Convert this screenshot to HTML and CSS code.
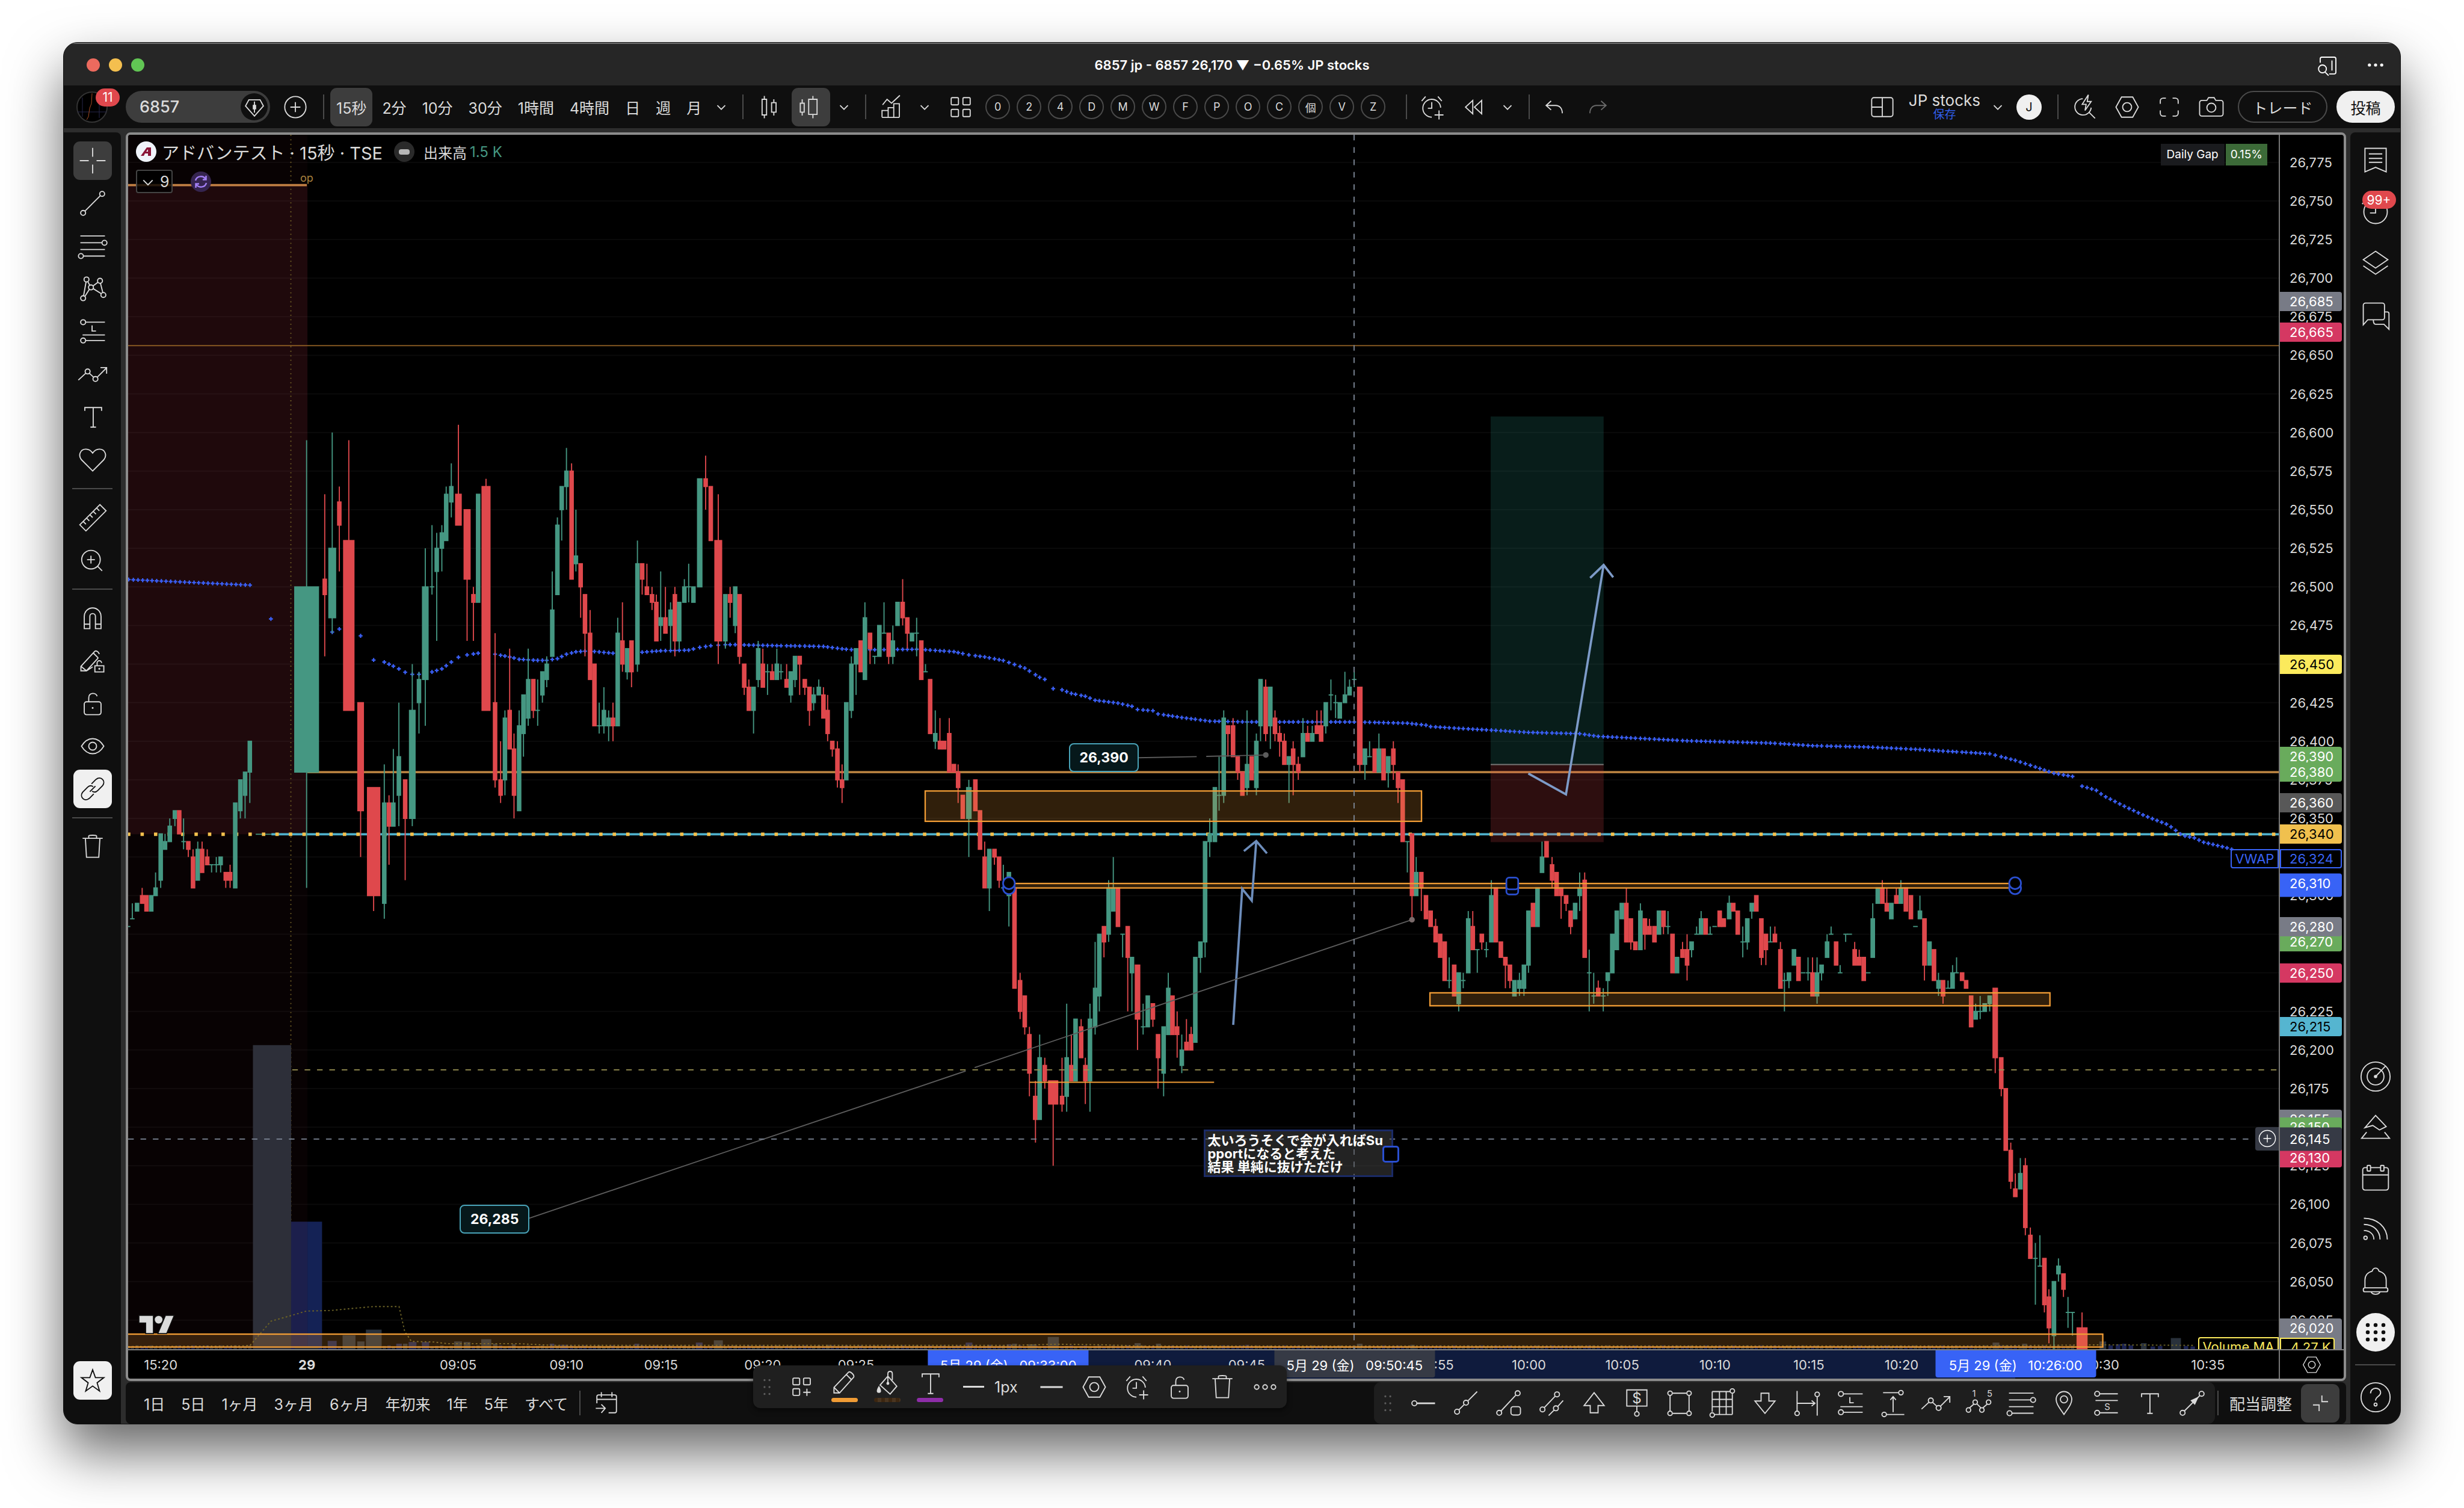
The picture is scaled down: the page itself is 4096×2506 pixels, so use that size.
FILE: index.html
```html
<!DOCTYPE html>
<html lang="ja">
<head>
<meta charset="utf-8">
<title>6857 jp - 6857 26,170 ▼ −0.65% JP stocks</title>
<link rel="stylesheet" href="styles.css">
</head>
<body>
<svg class="sprite" aria-hidden="true">
  <symbol id="cross" viewBox="0 0 28 28"><path d="M2.5 14h8M17.5 14h8M14 2.5v8M14 17.5v8"/></symbol>
  <symbol id="trend" viewBox="0 0 28 28"><circle cx="5.5" cy="22.5" r="2.2"/><circle cx="22.5" cy="5.5" r="2.2"/><path d="M7.1 20.9 20.9 7.1"/></symbol>
  <symbol id="fib" viewBox="0 0 28 28"><path d="M3 4.9h22M3 11h19.5M3 17h22M5.7 22.9H25"/><circle cx="24.6" cy="11" r="2.2"/><circle cx="3.5" cy="22.9" r="2.2"/></symbol>
  <symbol id="pattern" viewBox="0 0 28 28"><circle cx="5.5" cy="22.4" r="2.2"/><circle cx="8.5" cy="5.6" r="2.2"/><circle cx="12.5" cy="12.7" r="2.2"/><circle cx="20.6" cy="6.8" r="2.2"/><circle cx="23.6" cy="19.5" r="2.2"/><path d="m5.9 20.2 2.2-12.4M9.6 7.5l1.8 3.3M14.3 11.4l4.5-3.3M21 9l2.1 8.3M7 20.8l4.1-6.4M14.5 13.8l7.2 4.5"/></symbol>
  <symbol id="proj" viewBox="0 0 28 28"><circle cx="5.5" cy="5.6" r="2.2"/><path d="M7.7 5.6H25M5 17h20M7.7 22H25M13.5 8.5v5H17"/><circle cx="5.5" cy="22" r="2.2"/></symbol>
  <symbol id="path" viewBox="0 0 28 28"><circle cx="9.5" cy="11.5" r="2.2"/><circle cx="16.5" cy="18.2" r="2.2"/><path d="M1.2 19.2 7.9 13M11.1 13.1l3.8 3.5M18.1 16.6l8.4-8.4M21 8h5.5v5.5"/></symbol>
  <symbol id="text" viewBox="0 0 28 28"><path d="M7 8.5V5.5h15v3M14.5 5.5V23M12 23h5"/></symbol>
  <symbol id="heart" viewBox="0 0 28 28"><path d="M14 24 4 14C1 10.5 2.500 4.5 8 4.5c3 0 4.500 1.300 6 3.500 1.500-2.200 3-3.500 6-3.500 5.500 0 7 6 4 9.500z"/></symbol>
  <symbol id="ruler" viewBox="0 0 28 28"><path d="M2.5 20.5 20.5 2.5l5.5 5.500L8 26zM5.5 17.5l2.500 2.500M8.5 14.5l2.500 2.500M11.5 11.5l2.500 2.500M14.5 8.5l2.500 2.500M17.5 5.5l2.500 2.500"/></symbol>
  <symbol id="zoom" viewBox="0 0 28 28"><circle cx="12.5" cy="13.5" r="8.3"/><path d="m18.5 19.5 4 4M9 13.5h7M12.5 10v7"/></symbol>
  <symbol id="magnet" viewBox="0 0 28 28"><path d="M6.5 23.5V12.5a7.5 7.5 0 0 1 15 0v11h-5v-11a2.500 2.500 0 0 0-5 0v11zM6.5 19.5h5M16.5 19.5h5"/></symbol>
  <symbol id="penlock" viewBox="0 0 28 28"><path d="M14 19.5 8.5 23H3.5v-4L15.5 6c1-1.500 3.500-.5 4.500 2M3.5 19l5 4M8.5 23 19 11.5M14.5 7l4.500 4.500M16 18.5h8V24h-8zM18 18.5V16a2 2 0 0 1 4 0"/><circle cx="20" cy="21.2" r=".4"/></symbol>
  <symbol id="lock" viewBox="0 0 28 28"><rect x="6.5" y="12.5" width="15" height="11.5" rx="2"/><path d="M10.5 12.5V9c0-5 6.500-5 7.500-1.500"/><circle class="solid" cx="14" cy="18" r=".8"/></symbol>
  <symbol id="eye" viewBox="0 0 28 28"><path d="M4 14c5.500-9 14.500-9 20 0-5.500 9-14.500 9-20 0z"/><circle cx="14" cy="14" r="3.5"/></symbol>
  <symbol id="link" viewBox="0 0 28 28"><path d="M13 9.5l4-4c4.500-3.500 9 1.500 6 5.500l-4.500 4.500c-1.500 1.500-3.500 1.500-5 .5M15 18.5l-4 4c-4.500 3.500-9-1.500-6-5.500l4.500-4.500c1.500-1.500 3.500-1.500 5-.5M11.5 16.500l5-5"/></symbol>
  <symbol id="trash" viewBox="0 0 28 28"><path d="M5 6.5h18M10.5 6V4.5c0-1 7-1 7 0V6M7.5 6.5l1 17h11l1-17"/></symbol>
  <symbol id="star" viewBox="0 0 28 28"><path d="m14 4.500 2.500 7h7.500l-6 4.600 2.200 7.400L14 19l-6.200 4.500L10 16.100 4 11.500h7.500z"/></symbol>
  <symbol id="chev" viewBox="0 0 28 28"><path d="m10.500 12.500 3.500 3.500 3.500-3.500"/></symbol>
  <symbol id="fold" viewBox="0 0 28 28"><path class="mid" d="m8 12 6 6 6-6"/></symbol>
  <symbol id="plusc" viewBox="0 0 28 28"><circle cx="14" cy="14" r="9.5"/><path d="M9.5 14h9M14 9.5v9"/></symbol>
  <symbol id="gem" viewBox="0 0 28 28"><path d="M9 7.5h10l3 5.500-8 9L6 13z"/><path class="thick" d="M14 12v4"/><path d="M14 9v10"/></symbol>
  <symbol id="candles" viewBox="0 0 28 28"><path d="M8 7h4v14H8zM10 4v3M10 21v3M16.5 10h4v8.500h-4zM18.5 7v3M18.5 18.5v3"/></symbol>
  <symbol id="hollow" viewBox="0 0 28 28"><path d="M4.5 10.5H8v8H4.5zM6.2 7v3.500M6.2 18.5v3M12 7h7.500v13.500H12zM15.8 4v3M15.8 20.500V24"/></symbol>
  <symbol id="indic" viewBox="0 0 28 28"><path d="M6 12l4-5 4 3.500 7.500-7M5.5 23v-6H11v6M11 23V14.500h5V23M16 23V11h5v12M5.5 23.200H21"/></symbol>
  <symbol id="grid4" viewBox="0 0 28 28"><rect x="5.5" y="5.5" width="6.5" height="6.5" rx="1"/><rect x="16" y="5.5" width="6.5" height="6.5" rx="1"/><rect x="5.5" y="16" width="6.5" height="6.5" rx="1"/><rect x="16" y="16" width="6.5" height="6.5" rx="1"/></symbol>
  <symbol id="gridplus" viewBox="0 0 28 28"><rect x="6" y="6" width="6" height="6" rx="1"/><rect x="15.5" y="6" width="6" height="6" rx="1"/><rect x="6" y="15.5" width="6" height="6" rx="1"/><path d="M18.5 15.5V22M15.2 18.700h6.600"/></symbol>
  <symbol id="alarm" viewBox="0 0 28 28"><path d="M21.5 14.5a8 8 0 1 0-8 8.500M13.5 9.5V15H10M4.5 8.5 8 4.5M22.5 8.5 19 4.5M20 17v8M16 21h8"/></symbol>
  <symbol id="rewind" viewBox="0 0 28 28"><path d="M12.5 8 6 14l6.500 6zM20.5 8 14 14l6.500 6z"/></symbol>
  <symbol id="undo" viewBox="0 0 28 28"><path d="M10.5 8.5 6 12.5l4.500 4M6.500 12.5h8c3.500 0 6 2.500 6 7"/></symbol>
  <symbol id="redo" viewBox="0 0 28 28"><path d="m17.5 8.5 4.500 4-4.500 4M21.5 12.5h-8c-3.500 0-6 2.500-6 7"/></symbol>
  <symbol id="layout" viewBox="0 0 28 28"><rect x="4.5" y="5.5" width="19" height="17" rx="2"/><path d="M14 5.5v17M4.5 14H14"/></symbol>
  <symbol id="flash" viewBox="0 0 28 28"><path d="M12 6.5a7.300 7.300 0 1 0 7.500 8M18 19l5 5M17 3l-5.500 8.500H15L14 17l5.500-8H16z"/></symbol>
  <symbol id="hex" viewBox="0 0 28 28"><path d="M9 5h10l5 9-5 9H9l-5-9z"/><circle cx="14" cy="14" r="4"/></symbol>
  <symbol id="full" viewBox="0 0 28 28"><path d="M11 6H8.500A2.500 2.500 0 0 0 6 8.500V11M17 6h2.500A2.500 2.500 0 0 1 22 8.500V11M11 22H8.500A2.500 2.500 0 0 1 6 19.500V17M17 22h2.500a2.500 2.500 0 0 0 2.500-2.500V17"/></symbol>
  <symbol id="camera" viewBox="0 0 28 28"><path d="M5.5 8H10l1.500-2.500h5L18 8h4.500a2 2 0 0 1 2 2v10a2 2 0 0 1-2 2h-17a2 2 0 0 1-2-2V10a2 2 0 0 1 2-2z"/><circle cx="14" cy="14.5" r="4"/></symbol>
  <symbol id="panel" viewBox="0 0 28 28"><path d="M7 12V8.500c0-1 .5-1.500 1.500-1.500h11c1 0 1.500.5 1.500 1.500v12c0 1-.5 1.500-1.500 1.500H15M17.5 10v9M11.5 20.500l3 3"/><circle cx="9" cy="17.5" r="3.5"/></symbol>
  <symbol id="dots" viewBox="0 0 28 28"><circle class="solid" cx="8.5" cy="14" r="1.4"/><circle class="solid" cx="14" cy="14" r="1.4"/><circle class="solid" cx="19.5" cy="14" r="1.4"/></symbol>
  <symbol id="rings" viewBox="0 0 28 28"><circle cx="6.5" cy="14" r="2"/><circle cx="14" cy="14" r="2"/><circle cx="21.5" cy="14" r="2"/></symbol>
  <symbol id="news" viewBox="0 0 28 28"><path d="M4.5 3.5h19v21L14 20.500 4.500 24.500zM8 8.5h12M8 12.5h12M8 16h12"/></symbol>
  <symbol id="clock" viewBox="0 0 28 28"><circle cx="14" cy="14" r="10.5"/><path d="M14 7v8H9M2 7l4-4"/></symbol>
  <symbol id="layers" viewBox="0 0 28 28"><path d="M14 3 25 10.500l-11 7.500L3 10.500zM3 16l11 7.500L25 16"/></symbol>
  <symbol id="chat" viewBox="0 0 28 28"><path d="M5 3h15a2 2 0 0 1 2 2v11a2 2 0 0 1-2 2H7l-4 4.500V5a2 2 0 0 1 2-2zM22 11h2.500a1.500 1.500 0 0 1 1.500 1.500v14L21.500 22H14c-1.500 0-2-1.500-2-4"/></symbol>
  <symbol id="radar" viewBox="0 0 28 28"><circle cx="14" cy="14" r="13"/><circle cx="14" cy="14" r="7.5"/><circle class="solid" cx="14" cy="14" r="1.5"/><path d="m14 14 9-9.500"/></symbol>
  <symbol id="hill" viewBox="0 0 28 28"><path d="m14 3 9.500 10-6 3-6-4-7 2zM6 18l-4.500 5.500h25L22 18"/></symbol>
  <symbol id="cal" viewBox="0 0 28 28"><rect x="2.5" y="4" width="23" height="20" rx="2"/><path d="M2.5 10.500h23"/><rect class="dark" x="6.5" y="2" width="3" height="5" rx=".5"/><rect class="dark" x="18.500" y="2" width="3" height="5" rx=".5"/></symbol>
  <symbol id="rss" viewBox="0 0 28 28"><circle cx="5" cy="21" r="1.5"/><path d="M3.5 14.500c5 0 9 3 9 8M3.5 9c9 0 14.500 6 14.500 13.500M3.5 3.500c12 0 21 8 21 19"/></symbol>
  <symbol id="bell" viewBox="0 0 28 28"><path d="M4.5 20v-7c0-4 2.500-7 6.500-8 1-3.500 5-3.500 6 0 4 1 6.500 4 6.500 8v7M4.500 20h19c2 0 2 3.500 0 3.500h-19c-2 0-2-3.500 0-3.500M10 23.500c1 3 7 3 8 0"/></symbol>
  <symbol id="apps" viewBox="0 0 28 28"><path class="pad" d="M7 7.5h.01M14 7.5h.01M21 7.5h.01M7 14h.01M14 14h.01M21 14h.01M7 20.500h.01M14 20.500h.01M21 20.500h.01"/></symbol>
  <symbol id="help" viewBox="0 0 28 28"><circle cx="14" cy="14" r="13"/><path d="M9.5 10.500c0-6 9-6 9-.5 0 3.500-4.500 3-4.500 7"/><circle cx="14" cy="20.500" r="1.300"/></symbol>
  <symbol id="goto" viewBox="0 0 28 28"><path d="M5.5 14V8c0-1 .5-1.500 1.500-1.500h14.500c1 0 1.500.5 1.500 1.500v13c0 1-.5 1.500-1.500 1.500H16M5.500 10.500H23M9.500 4v4.500M19 4v4.500M4.500 18.500H13M9.500 15l3.500 3.500-3.500 4"/></symbol>
  <symbol id="pencil" viewBox="0 0 28 28"><path d="M4.500 22.500v-5L17.500 4c1.500-1.500 6 3 4.500 4.500L9.500 22.500zM4.500 17.500l5 5M15.500 6l4.500 4.500"/></symbol>
  <symbol id="bucket" viewBox="0 0 28 28"><path d="m14.500 7.500 8 9-6 7-9-8zM14.500 14V5.500c0-3 4-3 4 0V11"/><circle class="solid" cx="14.500" cy="14" r="1.300"/><path class="solid" d="M6.500 16c-2.500 4-2.500 6.500 0 6.500s2.500-2.500 0-6.500z"/></symbol>
  <symbol id="dash" viewBox="0 0 28 28"><path class="mid" d="M4 14h20"/></symbol>
  <symbol id="grip" viewBox="0 0 28 28"><path class="grips" d="M11.500 7h.01M16.500 7h.01M11.500 14h.01M16.500 14h.01M11.500 21h.01M16.500 21h.01"/></symbol>
  <symbol id="hline" viewBox="0 0 28 28"><circle cx="6" cy="14" r="2.200"/><path class="mid" d="M8.500 14H24.500"/></symbol>
  <symbol id="ray" viewBox="0 0 28 28"><circle cx="6" cy="21.500" r="2.200"/><circle cx="14" cy="13.500" r="2.200"/><path d="m7.500 20 5-5M15.500 12 24 3.500"/></symbol>
  <symbol id="sqline" viewBox="0 0 28 28"><circle cx="5.500" cy="22.500" r="2.200"/><circle cx="22" cy="5" r="2.200"/><path d="M7 21 20.500 6.500"/><rect x="16" y="17" width="8.500" height="7.500" rx="2"/></symbol>
  <symbol id="para" viewBox="0 0 28 28"><circle cx="6" cy="19.500" r="2.200"/><circle cx="19" cy="6" r="2.200"/><circle cx="18" cy="18.500" r="2.200"/><path d="M7.500 18 17.500 7.500M11.500 25l5-5M19.500 17l5-5.500"/></symbol>
  <symbol id="up" viewBox="0 0 28 28"><path d="M14 4.500 23 16h-5.500v6.500h-7V16H5z"/></symbol>
  <symbol id="down" viewBox="0 0 28 28"><path d="M14 23 23 12h-5.500V5h-7v7H5z"/></symbol>
  <symbol id="price" viewBox="0 0 28 28"><path d="M5 2h18v14.500H5zM14 16.500v5"/><circle cx="14" cy="23.500" r="2"/><text x="14" y="14" class="glyph tall">$</text></symbol>
  <symbol id="rect" viewBox="0 0 28 28"><path d="M8 5h12M8 23h12M5.500 7v14M22.500 7v14"/><circle cx="5.500" cy="5" r="2"/><circle cx="22.500" cy="5" r="2"/><circle cx="5.500" cy="23" r="2"/><circle cx="22.500" cy="23" r="2"/></symbol>
  <symbol id="fibgrid" viewBox="0 0 28 28"><path d="M5 3.500h16M5 10.500h18M5 17h18M7 24h16M5 3.500v18M11.500 3.500V24M17.500 3.500V24M23 5.500V24"/><circle cx="23" cy="3" r="2"/><circle cx="5" cy="24.500" r="2"/></symbol>
  <symbol id="dater" viewBox="0 0 28 28"><path d="M4.500 3v18M22.500 8v17M5 14h15M17.500 11.500 20.500 14l-3 2.500"/><circle cx="4.500" cy="23" r="2"/><circle cx="22.500" cy="6" r="2"/></symbol>
  <symbol id="pricer" viewBox="0 0 28 28"><path d="M5 4.500h14M8 24h16M14 8v14M11.500 11 14 8l2.500 3"/><circle cx="21" cy="4.500" r="2"/><circle cx="6" cy="24" r="2"/></symbol>
  <symbol id="elliott" viewBox="0 0 28 28"><circle cx="5" cy="20" r="2"/><circle cx="11" cy="13" r="2"/><circle cx="17" cy="20" r="2"/><circle cx="23" cy="13" r="2"/><path d="m6 18 4-3.500M12.500 14.500 16 18M18 18l4-3.500"/><text x="10" y="8" class="glyph">1</text><text x="24" y="8" class="glyph">5</text></symbol>
  <symbol id="pin" viewBox="0 0 28 28"><path d="M14 24C10 18 7 14.500 7 10.500a7 7 0 0 1 14 0C21 14.500 18 18 14 24z"/><circle cx="14" cy="10.500" r="3.200"/></symbol>
  <symbol id="sfib" viewBox="0 0 28 28"><circle cx="5.500" cy="5.500" r="2.200"/><path d="M8 5.500h16M4 11.500h20M8 22.500h16"/><circle cx="5.500" cy="22.500" r="2.200"/><text x="14.500" y="20" class="glyph">S</text></symbol>
  <symbol id="arrow" viewBox="0 0 28 28"><circle cx="5.500" cy="22.500" r="2.200"/><circle cx="22.500" cy="5.500" r="2.200"/><path d="M7 21 20.800 7.200"/><path class="solid" d="m20 8-7.500 3.500 4 4z"/></symbol>
  <symbol id="shrink" viewBox="0 0 28 28"><path d="M7.500 15.500H13V21M15.500 7v5.500H21"/></symbol>
  <symbol id="sync" viewBox="0 0 28 28"><path class="heavy" d="M5 12c2-8 13-9 17-2M23 16c-2 8-13 9-17 2M22.500 4v6.500H17M5.500 24v-6.500H11"/></symbol>
</svg>

<main class="window">
  <header class="titlebar">
    <div class="lights"><i class="red"></i><i class="amber"></i><i class="green"></i></div>
    <h1>6857 jp - 6857 26,170 ▼ −0.65% JP stocks</h1>
    <div class="title-actions"><button class="ib" aria-label="パネル"><svg><use href="#panel"/></svg></button><button class="ib" aria-label="その他"><svg><use href="#dots"/></svg></button></div>
  </header>

  <nav class="toolbar">
    <div class="avatar"><svg viewBox="0 0 52 52"><circle cx="26" cy="26" r="25" fill="#000" stroke="#333" stroke-width="2"/><path d="M2 34h48M10 10v32M38 8v36" stroke="#26264a"/><path d="M17 47l3-5 2-14 3-8 1-17" stroke="#a34a22" fill="none"/></svg><span class="badge">11</span></div>
    <button class="symbol"><span>6857</span><i><svg><use href="#gem"/></svg></i></button>
    <button class="ib add" aria-label="比較"><svg><use href="#plusc"/></svg></button>
    <hr>
    <button class="tf on">15秒</button><button class="tf">2分</button><button class="tf">10分</button><button class="tf">30分</button><button class="tf">1時間</button><button class="tf">4時間</button><button class="tf">日</button><button class="tf">週</button><button class="tf">月</button>
    <button class="ib slim" aria-label="時間足"><svg><use href="#chev"/></svg></button>
    <hr>
    <button class="ib" aria-label="ローソク足"><svg><use href="#candles"/></svg></button>
    <button class="ib on" aria-label="出来高ローソク"><svg><use href="#hollow"/></svg></button>
    <button class="ib slim" aria-label="チャート種類"><svg><use href="#chev"/></svg></button>
    <hr>
    <button class="ib" aria-label="インジケーター"><svg><use href="#indic"/></svg></button>
    <button class="ib slim" aria-label="お気に入り"><svg><use href="#chev"/></svg></button>
    <button class="ib tight" aria-label="テンプレート"><svg><use href="#grid4"/></svg></button>
    <div class="letters"><button>0</button><button>2</button><button>4</button><button>D</button><button>M</button><button>W</button><button>F</button><button>P</button><button>O</button><button>C</button><button>個</button><button>V</button><button>Z</button></div>
    <hr>
    <button class="ib" aria-label="アラート"><svg><use href="#alarm"/></svg></button>
    <button class="ib" aria-label="リプレイ"><svg><use href="#rewind"/></svg></button>
    <button class="ib slim" aria-label="リプレイ設定"><svg><use href="#chev"/></svg></button>
    <hr>
    <button class="ib" aria-label="元に戻す"><svg><use href="#undo"/></svg></button>
    <button class="ib dim" aria-label="やり直し"><svg><use href="#redo"/></svg></button>
    <div class="right-tools">
      <button class="ib" aria-label="レイアウト"><svg><use href="#layout"/></svg></button>
      <div class="saved"><b>JP stocks</b><a href="#">保存</a></div>
      <button class="ib slim" aria-label="レイアウト管理"><svg><use href="#chev"/></svg></button>
      <span class="user">J</span>
      <hr>
      <button class="ib" aria-label="クイック検索"><svg><use href="#flash"/></svg></button>
      <button class="ib" aria-label="設定"><svg><use href="#hex"/></svg></button>
      <button class="ib" aria-label="全画面"><svg><use href="#full"/></svg></button>
      <button class="ib" aria-label="スナップショット"><svg><use href="#camera"/></svg></button>
      <button class="trade">トレード</button>
      <button class="post">投稿</button>
    </div>
  </nav>

  <div class="work">
    <aside class="tools">
      <button class="ib on" aria-label="十字線"><svg><use href="#cross"/></svg></button>
      <button class="ib" aria-label="トレンドライン"><svg><use href="#trend"/></svg></button>
      <button class="ib" aria-label="フィボナッチ"><svg><use href="#fib"/></svg></button>
      <button class="ib" aria-label="パターン"><svg><use href="#pattern"/></svg></button>
      <button class="ib" aria-label="予測"><svg><use href="#proj"/></svg></button>
      <button class="ib" aria-label="パス"><svg><use href="#path"/></svg></button>
      <button class="ib" aria-label="テキスト"><svg><use href="#text"/></svg></button>
      <button class="ib" aria-label="アイコン"><svg><use href="#heart"/></svg></button>
      <hr>
      <button class="ib" aria-label="計測"><svg><use href="#ruler"/></svg></button>
      <button class="ib" aria-label="ズーム"><svg><use href="#zoom"/></svg></button>
      <hr>
      <button class="ib" aria-label="マグネット"><svg><use href="#magnet"/></svg></button>
      <button class="ib" aria-label="描画モード"><svg><use href="#penlock"/></svg></button>
      <button class="ib" aria-label="ロック"><svg><use href="#lock"/></svg></button>
      <button class="ib" aria-label="表示"><svg><use href="#eye"/></svg></button>
      <button class="ib white" aria-label="同期"><svg><use href="#link"/></svg></button>
      <hr>
      <button class="ib" aria-label="削除"><svg><use href="#trash"/></svg></button>
      <button class="ib white last" aria-label="お気に入りツール"><svg><use href="#star"/></svg></button>
    </aside>

    <section class="center">
      <div class="chart">
        <div class="pane">
          <svg id="plot" viewBox="228 240 3826 2160" preserveAspectRatio="none"></svg>
          <div class="legend">
            <svg class="brand" viewBox="0 0 34 34"><circle cx="17" cy="17" r="17" fill="#f0f3fa"/><path d="M8 24 18 10h7v14h-5v-4h-5l-2 4zM17 17h3v-4z" fill="#8a1538" fill-rule="evenodd"/></svg>
            <span class="name">アドバンテスト · 15秒 · TSE</span><i class="pill"></i><span class="vol">出来高</span><span class="val">1.5 K</span>
          </div>
          <div class="legend second"><button class="count"><svg><use href="#fold"/></svg>9</button><i class="sync"><svg><use href="#sync"/></svg></i></div>
          <div class="gap"><span>Daily Gap</span><span class="pct">0.15%</span></div>
          <span class="op">op</span>
          <span class="callout a">26,390</span>
          <span class="callout b">26,285</span>
          <p class="note">太いろうそくで会が入ればSu<br>pportになると考えた<br>結果 単純に抜けただけ</p>
          <svg class="tv" viewBox="-3 0 42 26"><path d="M14 22H7V11H0V4h14zM28 22h-8l7.500-18h8z"/><circle cx="20" cy="8" r="4"/></svg>
          <span class="tag vwap">VWAP</span>
          <span class="tag vma">Volume MA</span>
          <button class="plus" aria-label="追加"><svg><use href="#plusc"/></svg></button>
        </div>
        <div class="prices" id="prices"></div>
        <div class="times" id="times"></div>
        <button class="corner" aria-label="軸の設定"><svg><use href="#hex"/></svg></button>
      </div>

      <footer class="bottom">
        <div class="ranges"><button>1日</button><button>5日</button><button>1ヶ月</button><button>3ヶ月</button><button>6ヶ月</button><button>年初来</button><button>1年</button><button>5年</button><button>すべて</button></div>
        <hr>
        <button class="ib goto" aria-label="日付へ移動"><svg><use href="#goto"/></svg></button>
        <div class="favs">
          <svg class="grip"><use href="#grip"/></svg>
          <button aria-label="水平線"><svg><use href="#hline"/></svg></button><button aria-label="半直線"><svg><use href="#ray"/></svg></button><button aria-label="情報ライン"><svg><use href="#sqline"/></svg></button><button aria-label="チャネル"><svg><use href="#para"/></svg></button><button aria-label="上矢印"><svg><use href="#up"/></svg></button><button aria-label="価格ノート"><svg><use href="#price"/></svg></button><button aria-label="長方形"><svg><use href="#rect"/></svg></button><button aria-label="グリッド"><svg><use href="#fibgrid"/></svg></button><button aria-label="下矢印"><svg><use href="#down"/></svg></button><button aria-label="日付範囲"><svg><use href="#dater"/></svg></button><button aria-label="ロング"><svg><use href="#proj"/></svg></button><button aria-label="価格範囲"><svg><use href="#pricer"/></svg></button><button aria-label="パス"><svg><use href="#path"/></svg></button><button aria-label="エリオット波動"><svg><use href="#elliott"/></svg></button><button aria-label="フィボナッチ"><svg><use href="#fib"/></svg></button><button aria-label="ピン"><svg><use href="#pin"/></svg></button><button aria-label="ショート"><svg><use href="#sfib"/></svg></button><button aria-label="テキスト"><svg><use href="#text"/></svg></button><button aria-label="矢印"><svg><use href="#arrow"/></svg></button>
        </div>
        <hr>
        <button class="adj">配当調整</button>
        <button class="ib on" aria-label="縮小"><svg><use href="#shrink"/></svg></button>
      </footer>

      <div class="float">
        <svg class="grip"><use href="#grip"/></svg>
        <button class="ib" aria-label="テンプレート"><svg><use href="#gridplus"/></svg></button>
        <button class="ib color line" aria-label="線の色"><svg><use href="#pencil"/></svg></button>
        <button class="ib color fill" aria-label="塗りつぶし"><svg><use href="#bucket"/></svg></button>
        <button class="ib color ink" aria-label="文字色"><svg><use href="#text"/></svg></button>
        <button class="px"><i></i>1px</button>
        <button class="ib" aria-label="線種"><svg><use href="#dash"/></svg></button>
        <button class="ib" aria-label="設定"><svg><use href="#hex"/></svg></button>
        <button class="ib" aria-label="アラート"><svg><use href="#alarm"/></svg></button>
        <button class="ib" aria-label="ロック"><svg><use href="#lock"/></svg></button>
        <button class="ib" aria-label="削除"><svg><use href="#trash"/></svg></button>
        <button class="ib" aria-label="その他"><svg><use href="#rings"/></svg></button>
      </div>
    </section>

    <aside class="side">
      <button class="ib" aria-label="ウォッチリスト"><svg><use href="#news"/></svg></button>
      <button class="ib alerts" aria-label="アラート"><svg><use href="#clock"/></svg><span class="badge">99+</span></button>
      <button class="ib" aria-label="オブジェクト"><svg><use href="#layers"/></svg></button>
      <button class="ib" aria-label="チャット"><svg><use href="#chat"/></svg></button>
      <div class="lower">
        <button class="ib" aria-label="スクリーナー"><svg><use href="#radar"/></svg></button>
        <button class="ib" aria-label="パイン"><svg><use href="#hill"/></svg></button>
        <button class="ib" aria-label="カレンダー"><svg><use href="#cal"/></svg></button>
        <button class="ib" aria-label="ニュース"><svg><use href="#rss"/></svg></button>
        <button class="ib" aria-label="通知"><svg><use href="#bell"/></svg></button>
        <button class="ib white round" aria-label="製品"><svg><use href="#apps"/></svg></button>
        <hr>
        <button class="ib" aria-label="ヘルプ"><svg><use href="#help"/></svg></button>
      </div>
    </aside>
  </div>
</main>
<script src="chart.js"></script>
</body>
</html>
```

FILE: styles.css
```css
* { box-sizing: border-box; margin: 0; padding: 0; }
body {
  height: 100vh;
  padding: 70px 105px 139px;
  background: #fff;
  color: #dbdbdb;
  font-family: Inter, "Noto Sans CJK JP", sans-serif;
  font-size: 25px;
  overflow: hidden;
}
.sprite { display: none; }
button { border: 0; background: none; color: inherit; font: inherit; cursor: pointer; white-space: nowrap; }
svg { display: block; fill: none; stroke: currentColor; stroke-width: 1; }
hr { flex: none; width: 2px; height: 41px; border: 0; background: #4a4a4a; }
.solid { fill: currentColor; stroke: none; }
.thick { stroke-width: 3; }
.mid { stroke-width: 1.5; }
.heavy { stroke-width: 2.5; }
.dark { fill: #0f0f0f; }
.pad { stroke-width: 3.5; stroke-linecap: round; }
.grips { stroke-width: 2; stroke-linecap: round; }
.glyph { font: 8px Inter, sans-serif; fill: currentColor; stroke: none; text-anchor: middle; }
.glyph.tall { font-size: 13px; }

.window {
  display: flex;
  flex-direction: column;
  height: 100%;
  border: 1px solid #111;
  border-radius: 24px;
  background: #2d2d2d;
  overflow: hidden;
  box-shadow: 0 46px 92px rgba(0, 0, 0, .6);
}

/* Title bar */
.titlebar {
  display: grid;
  grid-template-columns: 1fr auto 1fr;
  align-items: center;
  height: 71px;
  padding: 0 9px;
  border-top: 2px solid #6c6c6c;
  background: #262626;
}
.titlebar h1 { font-size: 22px; font-weight: 600; color: #fff; }
.lights { display: flex; gap: 15px; margin-left: 29px; }
.lights i { width: 22px; height: 22px; border-radius: 50%; }
.red { background: #ec6a5e; }
.amber { background: #f4bf4f; }
.green { background: #61c554; }
.title-actions { display: flex; justify-content: flex-end; gap: 15px; color: #fff; }

/* Icon buttons */
.ib { position: relative; display: grid; place-items: center; flex: none; width: 64px; height: 64px; border-radius: 11px; }
.ib svg { width: 52px; height: 52px; }
.ib.on { background: #3d3d3d; }
.ib.white { background: #f0f0f0; color: #0f0f0f; }
.ib.round { border-radius: 50%; }
.ib.slim { width: 34px; margin-right: 8px; }
.ib.slim svg { margin: 0 -9px; }
.ib.tight { width: 58px; }
.ib.add { width: 72px; }
.ib.dim { color: #6a6a6a; }

/* Top toolbar */
.toolbar { display: flex; align-items: center; gap: 6px; flex: none; height: 71px; padding: 0 9px 0 21px; background: #0f0f0f; }
.toolbar > hr { margin: 0 4px; }
.avatar { position: relative; width: 52px; margin-right: 24px; }
.badge {
  position: absolute;
  display: grid;
  place-items: center;
  height: 30px;
  padding: 0 8px;
  border-radius: 15px;
  background: #e0484d;
  color: #fff;
  font-size: 21px;
}
.avatar .badge { left: 32px; top: -5px; width: 40px; }
.symbol { display: flex; align-items: center; justify-content: space-between; width: 240px; height: 53px; padding: 0 4px 0 23px; border-radius: 27px; background: #3d3d3d; font-size: 27px; font-weight: 500; }
.symbol i { display: grid; place-items: center; width: 45px; height: 45px; border-radius: 50%; background: #0f0f0f; }
.symbol svg { width: 52px; height: 52px; margin: -4px; }
.tf { height: 64px; padding: 0 10px; border-radius: 11px; }
.tf.on { background: #3d3d3d; }
.letters { display: flex; gap: 11px; margin: 0 24px 0 6px; }
.letters button { width: 41px; height: 41px; border: 2px solid #4a4a4a; border-radius: 50%; font-size: 18px; }
.right-tools { display: flex; align-items: center; gap: 6px; margin-left: auto; }
.saved { display: grid; justify-items: center; align-content: center; margin: 0 6px; line-height: 26px; }
.saved b { font-size: 26px; font-weight: 400; }
.saved a { color: #2f5ee8; font-size: 19px; line-height: 22px; text-decoration: none; }
.user { display: grid; place-items: center; width: 42px; height: 42px; border-radius: 50%; background: #f0f0f0; color: #0f0f0f; font-size: 20px; }
.right-tools hr { margin: 0 6px 0 20px; }
.trade { width: 149px; height: 53px; margin: 0 9px 0 6px; border: 2px solid #4a4a4a; border-radius: 27px; }
.post { width: 97px; height: 53px; border-radius: 27px; background: #f0f0f0; color: #0f0f0f; }

/* Work area */
.work { display: grid; grid-template-columns: 95px minmax(0, 1fr) 83px; flex: 1; min-height: 0; padding-top: 7px; }
.tools { display: flex; flex-direction: column; align-items: center; gap: 7px; padding: 15px 0 40px; border-radius: 0 8px 0 0; background: #0f0f0f; }
.tools hr, .side hr { width: 67px; height: 2px; }
.tools hr { margin: 8px 0; }
.tools .last { margin-top: auto; }
.side { display: flex; flex-direction: column; align-items: center; gap: 22px; padding: 14px 0 12px; border-radius: 8px 0 0 0; background: #0f0f0f; }
.lower { display: flex; flex-direction: column; align-items: center; gap: 21px; margin-top: auto; }
.alerts .badge { left: 10px; top: -3px; width: 56px; }
.center { position: relative; display: flex; flex-direction: column; min-width: 0; gap: 2px; padding: 0 7px 0 8px; }

/* Chart */
.chart { display: grid; grid-template: minmax(0, 1fr) 49px / minmax(0, 1fr) 108px; flex: 1; min-height: 0; border: 4px solid #8c8c8c; border-radius: 8px; background: #000; overflow: hidden; }
.pane { position: relative; overflow: hidden; }
#plot { width: 100%; height: 100%; stroke: none; }
.prices { position: relative; overflow: hidden; border-left: 2px solid #767676; font-size: 22px; }
.times { position: relative; overflow: hidden; border-top: 2px solid #7f7f7f; font-size: 22px; }
.corner { display: grid; place-items: center; border-top: 2px solid #7f7f7f; border-left: 2px solid #767676; }
.corner svg { width: 40px; height: 40px; }
.prices span { position: absolute; left: 0; display: flex; align-items: center; width: 103px; height: 32px; padding-left: 16px; border-radius: 0 4px 4px 0; transform: translateY(-50%); }
.prices .gray { background: #787b86; color: #fff; }
.prices .pink { background: #d53862; color: #fff; }
.prices .yellow { background: #fbea5c; color: #000; }
.prices .lime { background: #69ab5c; color: #fff; }
.prices .smoke { background: #585858; color: #fff; }
.prices .gold { background: #f0c04e; color: #000; }
.prices .cyan { background: #55b5d0; color: #000; }
.prices .outline { border: 2px solid #3863f6; padding-left: 14px; background: #000; color: #3863f6; }
.prices .blue { height: 39px; padding-bottom: 8px; background: #3863f6; color: #fff; }
.prices .slate { height: 39px; background: #363a45; color: #fff; }
.prices .ma { width: 91px; border: 2px solid #fbea5c; background: #000; color: #fbea5c; }
.times span { position: absolute; top: 0; display: flex; align-items: center; justify-content: center; height: 100%; transform: translateX(-50%); white-space: pre; }
.times .strong { font-weight: 700; }
.times .range { background: #0f1b3d; }
.times .blue { width: 267px; height: 45px; background: #3863f6; color: #fff; border-radius: 0 0 4px 4px; }
.times .slate { width: 267px; height: 45px; background: #363a45; color: #fff; border-radius: 0 0 4px 4px; }

.legend { position: absolute; left: 13px; top: 11px; display: flex; align-items: center; height: 34px; white-space: nowrap; }
.brand { width: 34px; height: 34px; stroke: none; }
.name { margin-left: 9px; font-size: 29px; }
.pill { display: grid; place-items: center; width: 34px; height: 34px; margin: 0 15px 0 19px; border-radius: 50%; background: #2a2a2a; }
.pill::after { content: ""; width: 18px; height: 9px; border-radius: 4px; background: #b8b8b8; }
.vol, .val { font-size: 24px; }
.val { margin-left: 5px; color: #459782; }
.second { top: 58px; height: 39px; gap: 30px; }
.count { display: flex; align-items: center; width: 61px; height: 39px; gap: 2px; border: 2px solid #444; border-radius: 4px; background: rgba(0, 0, 0, .8); }
.count svg { width: 36px; height: 36px; }
.sync { display: grid; place-items: center; width: 34px; height: 34px; border-radius: 50%; background: #35244f; color: #a37ff5; }
.sync svg { width: 28px; height: 28px; }
.gap { position: absolute; right: 19px; top: 15px; display: flex; gap: 2px; color: #fff; font-size: 19px; }
.gap span { padding: 0 10px; line-height: 36px; background: #1a1b1e; }
.gap .pct { padding: 0 8px; background: #3c6a38; }
.op { position: absolute; left: 8%; top: 3%; color: #a8803e; font-size: 18px; }
.callout { position: absolute; display: grid; place-items: center; width: 116px; height: 48px; border: 2px solid #49a3b8; border-radius: 8px; background: #06181b; color: #fff; font-size: 23px; font-weight: 700; }
.callout.a { left: 43.75%; top: 50.1%; }
.callout.b { left: 15.42%; top: 88.1%; }
.note { position: absolute; left: 50%; top: 81.9%; width: 315px; height: 79px; padding: 4px; border: 3px solid #1a2a66; background: rgba(70, 70, 70, .5); color: #fff; font-size: 22px; font-weight: 700; line-height: 22px; white-space: nowrap; }
.note::after { content: ""; position: absolute; right: -13px; top: 24px; width: 22px; height: 22px; border: 3px solid #2a4fd0; border-radius: 5px; background: #000; }
.tv { position: absolute; left: 14px; bottom: 20px; width: 67px; height: 42px; fill: #dbdbdb; stroke: #111; stroke-width: 2; paint-order: stroke; }
.tag { position: absolute; right: 0; height: 32px; border: 2px solid; border-radius: 4px 0 0 4px; background: #000; font-size: 22px; line-height: 28px; text-align: center; }
.vwap { top: 58.8%; width: 80px; color: #3863f6; }
.vma { top: 99%; width: 134px; color: #fbea5c; }
.plus { position: absolute; right: 0; top: 81.7%; display: grid; place-items: center; width: 39px; height: 39px; border-radius: 4px 0 0 4px; background: #363a45; color: #fff; }
.plus svg { width: 40px; height: 40px; margin: -1px; }

/* Bottom bar */
.bottom { display: flex; align-items: center; flex: none; height: 69px; padding-right: 11px; padding-left: 30px; border-radius: 8px; background: #0f0f0f; }
.ranges { display: flex; gap: 27px; margin-right: 19px; }
.goto { margin-left: 11px; }
.favs { display: flex; align-items: center; gap: 7px; height: 69px; margin-left: auto; margin-right: 4px; padding-right: 6px; border-radius: 11px; background: #1e1e1e; }
.favs button { display: grid; place-items: center; width: 64px; height: 64px; }
.favs button svg { width: 52px; height: 52px; }
.grip { flex: none; width: 46px; height: 52px; color: #5c5c5c; }
.favs .grip { margin-right: -3px; }
.adj { margin: 0 15px 0 18px; font-size: 26px; }

/* Floating drawing toolbar */
.float { position: absolute; left: 1051px; bottom: 26px; display: flex; align-items: center; gap: 7px; height: 71px; padding-right: 4px; border-radius: 12px; background: #1f1f1f; box-shadow: 0 4px 8px rgba(0, 0, 0, .5); }
.float .grip { margin-right: -4px; }
.color svg { margin-bottom: 14px; }
.color::after { content: ""; position: absolute; left: 10px; bottom: 7px; width: 44px; height: 7px; border-radius: 4px; }
.line::after { background: #f09c35; }
.fill::after { background: repeating-linear-gradient(90deg, #3c2610 0 6px, #4a3520 6px 12px); }
.ink::after { background: #8e2da8; }
.px { display: flex; align-items: center; gap: 17px; width: 124px; padding-left: 16px; }
.px i { width: 35px; height: 3px; background: #dbdbdb; }
```

FILE: chart.js
```js
// Chart space: x 228–4054, y 240–2400. One price point is 2.7455 units high.
const NS = 'http://www.w3.org/2000/svg';
const plot = document.getElementById('plot');
const UNIT = 2.7455, TOP_PRICE = 26775, TOP_Y = 289;
const priceY = p => TOP_Y + (TOP_PRICE - p) * UNIT;
const UP = '#459782', DOWN = '#df484c', ORANGE = '#f09c35';

function draw(tag, attrs) {
  const el = document.createElementNS(NS, tag);
  for (const k in attrs) el.setAttribute(k, attrs[k]);
  plot.appendChild(el);
  return el;
}
const box = (x, y, x2, y2, fill, extra) => draw('rect', { x, y, width: x2 - x, height: y2 - y, fill, ...extra });
const path = (d, stroke, width, extra) => draw('path', { d, stroke, 'stroke-width': width, fill: 'none', ...extra });

// Bars per segment: colour, x, [w width], body top, body bottom, [^ high], [_ low]
const segments = [
  { x: 220, y: 730, kx: 1.4255, ky: 1.6505, w: 11.5, vwap: '510,667 529,651 547,642 571,645 601,662 634,733 661,739 684,751 698,759 714,769 732,775 749,775 765,772 782,768 807,759 831,739 849,725 871,718 899,713 942,716 979,724 1003,731 1050,734 1073,734 1100,729 1123,716 1147,709 1170,707 1194,708 1241,713 1277,712 1315,710 1362,706 1433,704 1461,696 1489,691 1526,688 1562,688',
    bars: `g13w8 1516 1516;g22 1493 1493 ^1449;g34 1449 1471;r47 1426 1450 ^1403;r58 1426 1471;g70 1426 1471;g81 1403 1427 ^1358;g94 1244 1381 _1403;g105 1268 1290 ^1244;g117 1221 1268 ^1198;g130 1177 1199 _1221;r141 1177 1245;g152 1267 1267 ^1198 _1288;r164 1268 1290 _1312;r176 1312 1404 ^1289;g188 1289 1381 ^1268;r199 1289 1359 ^1268;r212 1312 1336 ^1289;g223 1335 1335 _1358;g235 1335 1335 ^1312 _1358;g246 1312 1336 _1358;r259 1358 1381 _1403;r270 1358 1381 ^1335 _1403;g283 1154 1404;g296 1086 1177 _1198;g308 1063 1131 _1198;g320 972 1064 _1154;
g464w63 518 1064 ^89 _1403;r510 497 542 ^248 _723;g529w20 406 610 ^66 _655;r547 269 340 ^224 _474;r571w29 383 882 ^89;r601w17 858 1177 _1312;r634w34 1109 1427 _1471;g661 1154 1450 ^1040 _1494;r673 1154 1222 ^1131 _1335;g684 1154 1222 ^995;g698 1018 1131 ^858 _1221;r714 1086 1199 _1380;g732w17 881 1199 ^746 _1221;g749 791 859 ^769 _949;g765w17 518 791 ^406 _928;g782 518 518 ^338 _542;g794 406 474 ^360 _678;g807 360 408 ^338 _474;g818 248 384 ^224;g831 224 270 ^157 _315;r849w17 248 340 ^43;r871w18 292 497 _678;r887 542 565 ^518 _678;g899 248 565;r919w23 224 882 ^201;r942 858 1087 ^655 _1109;r956 1086 1131 ^972 _1154;g967 904 1087 ^881 _1131;r979 881 996 ^700;r990 995 1131 ^949 _1198;g1003 928 1177 ^881;g1014 837 950 _1018;g1026 791 905 ^700 _928;r1039 791 882 _904;g1050 881 881 ^791 _928;g1062 769 837 _858;g1073 746 791 ^723 _814;g1087 588 724 ^474;g1100 338 542 ^315;g1111 224 293 _383;g1123 178 225 ^111 _292;r1136 178 497 ^157;g1147 429 451 ^292 _474;r1159 451 519 _609;r1170 542 656 _723;r1183 655 791 ^588;r1194 746 928;g1206 928 928 ^858 _949;g1218 881 928 ^814 _949;g1230 904 928 ^881 _972;r1241 904 928 ^858 _972;g1253 655 928 ^609;r1265 678 747 ^565 _769;g1277 700 770 _791;r1288 678 770 _814;g1303 451 747 ^383 _769;r1315 451 497 _542;r1327 518 542 ^451;r1340 542 565 ^518 _588;r1351 565 679 ^542;g1362 609 633 ^474 _678;r1374 609 656 ^518;g1387 588 633 ^565 _700;r1398 542 679 ^518 _723;g1409 565 679 _700;g1422 518 565 ^497;g1433 518 518 ^451 _565;g1445 518 565;g1461w14 201 519;r1476 201 225 ^134 _292;r1489 224 384;r1508w20 383 679 ^248 _746;g1526 542 679 _700;r1538 542 565 ^518 _609;g1551 518 633 _655` },
  { x: 1300, y: 1000, kx: 1.2062, ky: 1.4, w: 9.8, vwap: '19,206 99,208 159,209 199,210 239,216 269,219 319,218 399,217 428,219 479,223 511,231 545,236 585,245 631,264 663,287 674,292 692,315 711,318 731,327 761,334 782,344 831,351 861,359 873,367 906,370 917,378 968,387 1028,396 1108,398 1338,398 1452,401 1492,406',
    bars: `r19 81 236 _255;r29 255 312 _332;r39 312 370 ^293;g49 312 370 _427;g59 216 293 ^197 _312;r69 255 312 ^216;g79 274 274 ^255 _332;r89 274 293 ^255;g99 255 293 ^216;g108 274 274 ^255 _293;r120 293 312 ^255;g129 274 332 _350;g138 236 293 _312;r148 236 255 _332;r159 293 312 _332;r169 312 370 _408;g178 332 350 ^312 _370;g189 312 332 ^293;r199 332 390 ^312;r208 370 427 ^332 _446;r218 446 466 _485;r229 466 543 ^446 _562;r239 543 562 ^504 _600;g248 350 543;g259 255 370 ^236 _389;g269 216 255 _332;r279 197 274;g288 139 293 ^101;r299 178 216 _255;g309 235 235 _255;g319 158 236;g329 178 178 ^101;r339 178 236 _255;g348 197 236 ^158 _255;g358 101 159;r369 101 139 ^43 _158;r379 139 178 _216;g389 178 197;g399 178 178 ^139 _235;r409 197 293;g418 274 274 ^255;r428 293 427;g439 427 446 ^370 _466;r449 446 466 ^389;r458 446 466;r469 427 523 ^389;r479 504 523;r488 523 562 ^504 _600;r498 581 639;g511w12 562 639 ^543 _735;r525 543 620;r535 620 716;r545 735 812 ^697;g555 716 812 _869;r566 716 735 _754;r576 735 793 _812;g585 812 812 ^754;g597 774 831 _908;r609 812 1063;r621 1043 1120 ^1024 _1139;r631 1081 1158 _1177;r641 1177 1274 ^1158 _1331;r654w11 1331 1389 ^1293 _1446;g663 1235 1389 ^1177;r674 1254 1293 ^1235 _1312;r692w22 1293 1352 _1503;r711 1331 1352 ^1235 _1369;g721 1235 1332 ^1101 _1369;r731 1254 1293 ^1177;g740 1140 1293;r752 1158 1235 ^1140;r761 1254 1293 ^1235 _1350;g771 1140 1293 ^1101 _1369;g782 1063 1158 ^946 _1177;g791 927 1081 _1120;r801 908 947 _986;g811 812 928 ^792 _946;g821 812 870 ^735;r831 812 908;g841 927 927 _986;r852 908 986 _1120;g861 986 1024 _1120;r873w12 1005 1140 _1215;g885 1158 1158 ^1101 _1177;g895 1081 1158;r906 1101 1140 _1158;r917 1177 1235 _1312;g929 1158 1274 _1331;g939 1063 1177 ^1024;r948 1081 1177;r958 1158 1177 ^1120 _1235;g968 1216 1254 ^1177 _1274;r978 1197 1216 ^1140;r988 1177 1216 ^1158;g997 986 1197;g1008 946 986 _1024;g1018 697 947 _986;g1028 677 697 ^639 _735;g1039 562 697;g1048 581 581 ^485 _620;g1058 389 581 ^370 _600;r1067 408 427 _485;r1078 408 485 ^389;r1088 485 523 _543;r1098 523 581;g1108 504 562 ^370 _581;r1118 485 543;g1128 446 562 ^427 _581;g1137 293 408 _446;r1148 312 427 ^293 _446;g1158 312 408 _466;r1168 389 427 ^370 _446;r1178 427 446 ^408 _485;r1188 446 504 ^427;g1198 485 504 _600;r1207 466 504 ^446 _581;r1218 504 523 ^485 _543;g1228 427 485 ^389;r1238 427 446 ^408;g1248 427 446 ^408;r1258 408 427 ^370;r1267 408 446 ^370;g1277 350 408 _427;g1288 332 332 ^293 _370;g1298 350 350 ^332 _389;g1307 350 389;g1318 332 350 ^274;g1328 312 332 ^293;g1338 293 293 ^274 _312;r1350w12 312 504 _523;g1361 466 504 _543;g1371 485 485 ^446;r1382 466 523;g1391 466 523 ^427;r1401 466 543;g1411 485 523 _562;r1422 466 504 ^446 _543;r1432 523 562 _600;r1442 543 697;g1452 697 697 _774;r1462 677 831 _889;g1471 774 831 ^735;r1482 774 812 _870;r1492 831 889` },
  { x: 2380, y: 1200, kx: 1.12, ky: 1.2645, w: 9.2, vwap: '185,117 241,121 306,125 380,130 482,133 519,139 575,142 696,149 862,154 946,160 1057,163 1151,168 1206,172 1299,178 1350,193 1380,204 1427,222 1464,229 1483,251 1511,260 1525,272 1567,296 1607,317 1655,338 1683,362 1706,367 1725,377 1770,389 1789,396',
    bars: `r185 532 568;r195 568 602 ^550;r204 584 638;r213 602 689;g222 689 689 ^638 _706;r232 654 724;g241 671 741 _758;g250 689 689 ^671 _706;g260 550 671 ^532;r269 568 620 ^532;g278 620 620 _671;r287 584 602 _620;g296 620 620 ^602 _637;g306 498 602 ^463;r315 480 602;r325 602 638;r334 638 654 _706;r343 654 689 _706;g352 689 724;g362 689 706 ^671 _724;g371 654 706 _724;g380 532 654 _671;r389 515 568;g398 480 568;g407 411 447 ^377;r416 377 411;r427 428 463 ^411 _480;r436 446 498;r445 480 498 _550;r455 498 515 _532;r464 532 568 _584;g473 515 550;g482 480 498 ^446 _532;r492 463 638 ^446;g501 671 671 ^620 _758;g510 722 722 ^671 _741;r519 706 722 ^689;g529 722 722 ^706 _758;g538 671 689 _722;g547 584 671;g556 532 620;g566 515 550;r575 515 602 ^480;r584 550 602 _620;r593 602 620;g603 532 620 ^515;r612 550 584 _620;r621 568 584 ^550;r631 568 602;g640 532 584;r649 532 568 _584;g658 568 568 ^532 _584;r667 584 671;g676 637 671;r687 620 638 ^602;r696 620 654 ^584 _689;g705 602 620 _637;g715 584 584 ^568;g724 550 584 ^532;r733 550 584;g742 584 584 ^568;g751 568 568;r761 532 568;r769 550 568;g780 515 550 ^498;r788 515 532;r797 532 584;g807 602 602 ^568 _637;g816 550 602 _620;g825 515 532 _550;r834 498 532;r844 550 638 _654;r853 584 620 _654;g862 602 602 ^568;r871 584 602 ^568;r882 620 706 ^602;g890 689 689 ^671 _758;g899 671 689 _706;g909 620 654;r918 638 689;g927 671 671;g937 671 671 ^637 _689;r946 671 724 ^637;g955 671 724 ^637 _741;g964 654 671 _689;g975 602 638 ^584;g983 584 584 ^568;r993 602 654;g1001 671 671 ^654;g1012 584 584 _602;g1020 584 584;r1030 620 654 ^602;r1039 638 654 ^620;r1048 638 689;g1057 671 671;g1066 550 638 ^515;g1076 480 515;r1085 480 515 ^463;r1094 515 532 ^480;g1103 515 550;r1113 498 515 ^480;g1122 480 515 ^463;r1132 480 532;r1142 498 550;g1151 568 568;g1160 532 550 ^498;r1169 550 654 _689;g1179 602 654;r1188 620 689;g1197 689 706 ^671 _724;r1206 689 724 _741;g1216 706 706 ^689;g1225 671 706 ^654;g1233 671 671 ^637;r1244 671 689;r1252 689 706;r1262 722 793;g1271 758 776 ^741;g1280 758 758 ^722 _776;g1289 741 758;g1299 722 741 _758;r1310w11 706 863 _897;r1322 863 932 _949;r1331 932 1071;r1341 1071 1141 ^1053 _1158;r1350 1158 1175 ^1123;g1360 1123 1158 ^1089;r1370 1105 1245 ^1089 _1262;r1380 1262 1314 ^1245;g1390 1314 1314 ^1279 _1418;g1399 1331 1331 ^1262;r1408 1314 1419 _1435;r1417 1401 1471 ^1383 _1504;g1427 1366 1489 _1517;g1436 1331 1350 ^1314 _1366;r1446 1349 1384 _1401;g1455 1435 1435 ^1401 _1470;g1464 1435 1435 _1487;r1483w22 1471 1540 ^1435` }
];

const candles = [], vwap = [];
for (const s of segments) {
  const snap = v => Math.round((TOP_PRICE - (s.y + v / s.ky - TOP_Y) / UNIT) / 5) * 5;
  for (const row of s.bars.split(';')) {
    const [head, top, bottom, ...rest] = row.trim().split(' ');
    const [, colour, x, w] = head.match(/([gr])(\d+)(?:w(\d+))?/);
    const c = { up: colour === 'g', x: s.x + x / s.kx, w: (w || s.w) / s.kx, top: snap(+top), bottom: snap(+bottom) };
    c.high = c.top; c.low = c.bottom;
    for (const r of rest) r[0] === '^' ? c.high = snap(+r.slice(1)) : c.low = snap(+r.slice(1));
    candles.push(c);
  }
  for (const p of s.vwap.split(' ')) {
    const [x, y] = p.split(',').map(Number);
    vwap.push([s.x + x / s.kx, s.y + y / s.ky]);
  }
}

// Session background and grid
box(228, 240, 547, 2400, '#080203');
box(228, 330, 547, 1484, '#1f090c');
for (let p = 26775; p >= 26025; p -= 25) box(228, priceY(p) - 1, 4054, priceY(p) + 1, '#fff', { opacity: .045 });
path('M517.5 240V2400', '#6b5a24', 2, { 'stroke-dasharray': '2 6' });

// Volume columns
box(450, 1859, 518, 2400, '#2d2f39');
box(518, 2173, 547, 2400, '#1c1f4c');
box(547, 2173, 573, 2400, '#142255');
candles.forEach((c, i) => box(c.x - c.w / 2 + 1, 2395 - (i * 7 % 3), c.x + c.w / 2 - 1, 2400, c.up ? '#252a33' : '#141c48'));
const volumes = [[591, 16, 15, 1], [621, 23, 25], [642, 13, 14], [665, 28, 35], [710, 10, 10, 1], [721, 8, 10], [734, 14, 13, 1], [757, 13, 13, 1], [815, 14, 14], [831, 12, 13], [865, 18, 18], [881, 8, 10], [914, 7, 9], [982, 8, 10, 1], [1004, 14, 8, 1], [1133, 9, 10, 1], [1244, 12, 12, 1], [1278, 16, 16], [1473, 6, 8], [1506, 6, 7, 1], [1724, 12, 12, 1], [1760, 7, 8, 1], [1795, 8, 9, 1], [1805, 9, 10], [1836, 16, 9], [1874, 20, 22], [2024, 11, 11], [2061, 9, 10], [2144, 6, 7, 1], [2176, 6, 7, 1], [2219, 7, 8, 1], [2419, 10, 10], [2513, 8, 8], [2827, 6, 7, 1], [3551, 12, 12], [3570, 8, 7], [3602, 9, 10], [3741, 12, 14], [3755, 8, 7, 1], [3768, 8, 9, 1], [3779, 8, 10, 1], [3791, 8, 7, 1], [3814, 10, 11], [3830, 8, 5, 1], [3843, 8, 6, 1], [3871, 18, 20], [3889, 8, 6, 1], [3901, 8, 5, 1]];
for (const [x, w, h, blue] of volumes) box(x - w / 2, 2400 - h, x + w / 2, 2400, blue ? '#1b2352' : '#29313b');
path('M228 2395 430 2394 445 2393 482 2350 518 2340 545 2332 588 2331 620 2328 664 2324H710L720 2368 732 2386 772 2387 796 2390H923L983 2393H1800L1880 2391 1960 2392 2030 2394H3500L3750 2392 3905 2393', '#6b6226', 2, { 'stroke-dasharray': '3 4' });

// Level lines
path('M228 615H4054', '#946225', 2);
path('M228 329.5H546', '#c17f43', 4);
path('M547 1373.5H4054', '#b5803f', 4);
path('M455 1484H490', '#459782', 2);
path('M483 1484H4054', '#4fb0cb', 4);
path('M226 1484H4054', '#f3c04d', 6, { 'stroke-dasharray': '6 18' });
box(2652, 741, 2853, 1360, '#2f9f8e', { opacity: .18 });
box(2652, 1360, 2853, 1498, '#e0484d', { opacity: .2 });
path('M2652 1360H2853', '#777', 2);

// VWAP markers
const marks = candles.map(c => c.x).filter(x => x > 570);
for (let x = 3713; x < 3980; x += 8.3) marks.push(x);
let cross = '';
const mark = (x, y) => cross += `M${x - 3.5} ${y}h7M${x} ${y - 3.5}v7`;
for (let i = 0; i < 27; i++) mark(229 + i * 8.3, 1031 + i * .38);
mark(482, 1101);
for (const x of marks) {
  const k = vwap.findIndex(p => p[0] >= x);
  if (k < 1) continue;
  const [a, b] = [vwap[k - 1], vwap[k]];
  mark(x, a[1] + (b[1] - a[1]) * (x - a[0]) / (b[0] - a[0]));
}
path(cross, '#3a5ff5', 2.5);

// Candles
for (const c of candles) {
  const fill = c.up ? UP : DOWN, t = priceY(c.top), b = priceY(c.bottom);
  if (c.high !== c.top || c.low !== c.bottom) box(c.x - 1, priceY(c.high), c.x + 1, priceY(c.low), fill);
  box(c.x - c.w / 2, t - 1, c.x + c.w / 2, b + 1, fill);
}

// Drawings
const zone = (x, y, x2, y2) => box(x, y, x2, y2, 'rgba(240,156,53,.2)', { stroke: ORANGE, 'stroke-width': 2.5 });
zone(1646, 1407, 2529, 1461);
zone(2544, 1766, 3647, 1789);
zone(1795, 1571.5, 3585, 1579.5);
zone(220, 2373, 3741, 2396);
path('M1832 1925H2160', ORANGE, 2);
path('M2719 1376 2786 1413 2853 1005M2829 1028 2853 1005 2870 1027', '#7d9bc8', 4);
path('M2194 1823 2210 1581 2227 1602 2235 1496M2213 1514 2235 1496 2254 1518', '#6d8dbb', 4);
path('M2024 1348 2129 1346M2146 1345.5 2252 1343M941 2167 1718 1905M1734 1899 2512 1636', '#5c5c5c', 2);
draw('circle', { cx: 2252, cy: 1343, r: 5, fill: '#5c5c5c' });
draw('circle', { cx: 2512, cy: 1636, r: 5, fill: '#7a6a6a' });
path('M520 1903H4054', '#9a9354', 2, { 'stroke-dasharray': '10 12' });
path('M228 2026H4012', '#7d8796', 2, { 'stroke-dasharray': '10 12' });
path('M2409 240V2400', '#7d8796', 2, { 'stroke-dasharray': '10 12' });
for (const x of [1795, 3585]) for (const y of [1580, 1571]) draw('circle', { cx: x, cy: y, r: 10.5, fill: '#000', stroke: '#2a4fd0', 'stroke-width': 3 });
for (const y of [1580, 1571]) draw('rect', { x: 2680, y: y - 10, width: 21, height: 21, rx: 5, fill: '#000', stroke: '#2a4fd0', 'stroke-width': 3 });

// Price scale
const prices = document.getElementById('prices');
function priceLabel(text, y, kind) {
  const el = document.createElement('span');
  el.textContent = text;
  if (kind) el.className = kind;
  el.style.top = ((y - 240) / 21.6) + '%';
  prices.appendChild(el);
}
const fmt = p => p.toLocaleString('en-US');
for (let p = 26775; p >= 26025; p -= 25) if (![26450, 26275, 26325, 26250, 26150].includes(p)) priceLabel(fmt(p), priceY(p));
for (const [p, kind] of [[26685, 'gray'], [26665, 'pink'], [26450, 'yellow'], [26390, 'lime'], [26380, 'lime'], [26360, 'smoke'], [26340, 'gold'], [26324, 'outline'], [26270, 'lime'], [26280, 'gray'], [26250, 'pink'], [26215, 'cyan'], [26155, 'gray'], [26150, 'lime'], [26130, 'pink']]) priceLabel(fmt(p), priceY(p), kind);
priceLabel('26,145', 2026, 'slate');
priceLabel('26,310', 1575, 'blue');
priceLabel('', 2390, 'gray');
priceLabel('26,020', priceY(26020), 'gray');
priceLabel('4.27 K', 2396, 'ma');

// Time scale
const times = document.getElementById('times');
function timeLabel(text, x, kind) {
  const el = document.createElement('span');
  el.textContent = text;
  if (kind) el.className = kind;
  el.style.left = ((x - 228) / 38.26) + '%';
  times.appendChild(el);
  return el;
}
timeLabel('', 2618, 'range').style.width = (1935 / 38.26) + '%';
for (const [t, x] of [['15:20', 286], ['09:05', 815], ['09:10', 1008], ['09:15', 1176], ['09:20', 1357], ['09:25', 1523], ['09:40', 2051], ['09:45', 2218], ['09:55', 2554], ['10:00', 2720], ['10:05', 2886], ['10:10', 3051], ['10:15', 3218], ['10:20', 3383], ['10:30', 3740], ['10:35', 3928]]) timeLabel(t, x);
timeLabel('29', 546, 'strong');
timeLabel('5月 29 (金)   09:33:00', 1794, 'blue');
timeLabel('5月 29 (金)   09:50:45', 2410, 'slate');
timeLabel('5月 29 (金)   10:26:00', 3586, 'blue');
```
